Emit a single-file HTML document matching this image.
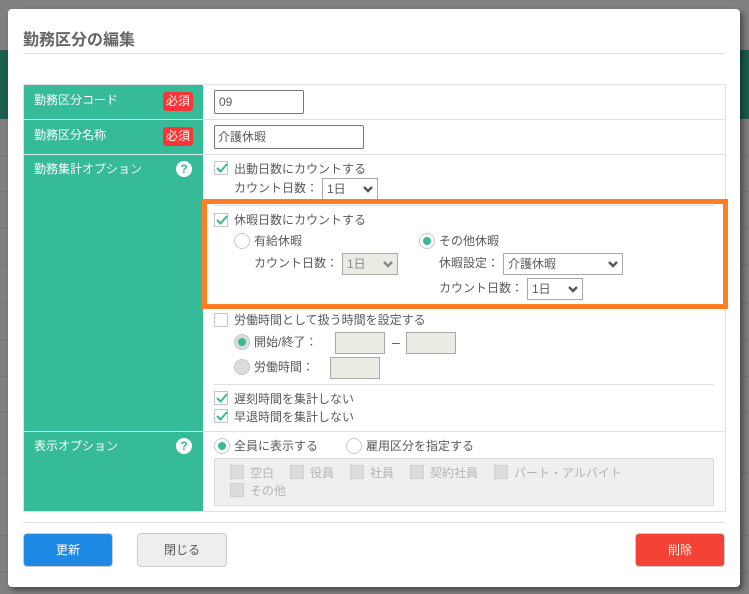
<!DOCTYPE html>
<html lang="ja"><head><meta charset="utf-8"><title>勤務区分の編集</title>
<style>
*{box-sizing:border-box}
html,body{margin:0;padding:0}
body{width:749px;height:594px;overflow:hidden;position:relative;background:#808080;font-family:"Liberation Sans","Noto Sans CJK JP",sans-serif;font-size:12px;color:#555}
div,span.a{position:absolute}
.t{position:absolute;white-space:nowrap;line-height:16px;font-size:12px;color:#5a5a5a}
.w{color:#fff}
.g{color:#b4b4b4}
.cb{position:absolute;width:14px;height:14px;border:1px solid #c4c4c4;background:#fff}
.cb svg{position:absolute;left:0;top:-1px}
.cbd{background:#dcdcdc;border-color:#cfcfcf}
.r{position:absolute;width:16px;height:16px;border-radius:50%;border:1px solid #c8c8c8;background:#fff}
.r i{position:absolute;left:3px;top:3px;width:8px;height:8px;border-radius:50%;background:#36bb99}
.rd{background:#dcdcdc}
.inp{position:absolute;border:1px solid #767676;border-radius:2px;background:#fff;font-size:12px;color:#5a5a5a;line-height:23px;padding-left:3px}
.sel{position:absolute;border:1px solid #a9a9a9;background:#fff;height:22px;font-size:12px;line-height:21px;padding-left:4px;color:#5a5a5a}
.sel svg{position:absolute;right:4px;top:7px}
.dis{background:#ebebe4;border-color:#a9a9a9}
.req{position:absolute;left:163px;width:30px;height:19px;background:#f93535;border-radius:3px;color:#fff;font-size:12px;line-height:19px;text-align:center}
.q{position:absolute;left:176px;width:16px;height:16px;border-radius:50%;background:#fff;color:#36bb99;font-weight:bold;font-size:12px;line-height:16px;text-align:center}
.hl{position:absolute;height:1px;background:#e0e0e0}
.bl{position:absolute;height:1px;background:#757575}
.btn{position:absolute;top:533px;height:34px;border-radius:4px;text-align:center;line-height:32px;font-size:12px;border:1px solid #ccc}
</style></head><body>
<div style="left:0;top:50px;width:749px;height:69px;background:#1b5e4e"></div>
<div class="bl" style="left:0;top:156px;width:749px"></div>
<div class="bl" style="left:0;top:191px;width:749px"></div>
<div class="bl" style="left:0;top:228px;width:749px"></div>
<div class="bl" style="left:0;top:265px;width:749px"></div>
<div class="bl" style="left:0;top:302px;width:749px"></div>
<div class="bl" style="left:0;top:339px;width:749px"></div>
<div class="bl" style="left:0;top:376px;width:749px"></div>
<div class="bl" style="left:0;top:411px;width:749px"></div>
<div class="bl" style="left:0;top:473px;width:749px"></div>
<div class="bl" style="left:0;top:535px;width:749px"></div>
<div class="bl" style="left:0;top:572px;width:749px"></div>

<div style="left:8px;top:9px;width:732px;height:578px;background:#fff;border-radius:4px;box-shadow:3px 3px 6px rgba(0,0,0,.45)"></div>

<span class="t" style="left:23px;top:32px;font-size:16px;line-height:18px;font-weight:bold;color:#666">勤務区分の編集</span>
<div class="hl" style="left:23px;top:53px;width:702px;background:#e2e2e2"></div>

<!-- table -->
<div style="left:23px;top:84px;width:703px;height:428px;border:1px solid #e0e0e0"></div>
<div style="left:24px;top:85px;width:179px;height:426px;background:#36bb99"></div>
<div class="hl" style="left:24px;top:119px;width:179px;background:#d5efe8"></div>
<div class="hl" style="left:24px;top:154px;width:179px;background:#d5efe8"></div>
<div class="hl" style="left:24px;top:431px;width:179px;background:#d5efe8"></div>
<div class="hl" style="left:203px;top:119px;width:522px"></div>
<div class="hl" style="left:203px;top:154px;width:522px"></div>
<div class="hl" style="left:203px;top:431px;width:522px"></div>

<span class="t w" style="left:34px;top:92px">勤務区分コード</span>
<div class="req" style="top:92px">必須</div>
<span class="t w" style="left:34px;top:127px">勤務区分名称</span>
<div class="req" style="top:127px">必須</div>
<span class="t w" style="left:34px;top:161px">勤務集計オプション</span>
<div class="q" style="top:161px">?</div>
<span class="t w" style="left:34px;top:438px">表示オプション</span>
<div class="q" style="top:438px">?</div>

<div class="inp" style="left:214px;top:90px;width:90px;height:24px;padding-left:4px">09</div>
<div class="inp" style="left:214px;top:125px;width:150px;height:24px">介護休暇</div>

<div class="cb" style="left:214px;top:161px"><svg width="14" height="14" viewBox="0 0 14 14"><path d="M2 7l3.5 3.5L12 3" fill="none" stroke="#36bb99" stroke-width="2"/></svg></div>
<span class="t" style="left:234px;top:161px">出動日数にカウントする</span>
<span class="t" style="left:234px;top:180px">カウント日数：</span>
<div class="sel" style="left:322px;top:178px;width:56px">1日<svg width="10" height="7" viewBox="0 0 10 7"><path d="M1 1l4 4 4-4" fill="none" stroke="#555" stroke-width="2.4"/></svg></div>

<!-- highlight box -->
<div class="hl" style="left:214px;top:205px;width:500px"></div>
<div style="left:202px;top:199px;width:526px;height:110px;border:5px solid #fd7e24"></div>

<div class="cb" style="left:214px;top:213px"><svg width="14" height="14" viewBox="0 0 14 14"><path d="M2 7l3.5 3.5L12 3" fill="none" stroke="#36bb99" stroke-width="2"/></svg></div>
<span class="t" style="left:234px;top:212px">休暇日数にカウントする</span>
<div class="r" style="left:234px;top:233px"></div>
<span class="t" style="left:254px;top:233px">有給休暇</span>
<span class="t" style="left:254px;top:255px">カウント日数：</span>
<div class="sel dis" style="left:342px;top:253px;width:56px;color:#8a8a8a;background:#ebebe4">1日<svg width="10" height="7" viewBox="0 0 10 7"><path d="M1 1l4 4 4-4" fill="none" stroke="#888" stroke-width="2.4"/></svg></div>

<div class="r" style="left:419px;top:233px"><i></i></div>
<span class="t" style="left:439px;top:233px">その他休暇</span>
<span class="t" style="left:439px;top:255px">休暇設定：</span>
<div class="sel" style="left:503px;top:253px;width:120px">介護休暇<svg width="10" height="7" viewBox="0 0 10 7"><path d="M1 1l4 4 4-4" fill="none" stroke="#555" stroke-width="2.4"/></svg></div>
<span class="t" style="left:439px;top:280px">カウント日数：</span>
<div class="sel" style="left:527px;top:278px;width:56px">1日<svg width="10" height="7" viewBox="0 0 10 7"><path d="M1 1l4 4 4-4" fill="none" stroke="#555" stroke-width="2.4"/></svg></div>

<div class="cb" style="left:214px;top:313px"></div>
<span class="t" style="left:234px;top:312px">労働時間として扱う時間を設定する</span>
<div class="r rd" style="left:234px;top:334px"><i></i></div>
<span class="t" style="left:254px;top:334px">開始/終了：</span>
<div class="sel dis" style="left:335px;top:332px;width:50px"></div>
<span class="t" style="left:392px;top:334px;font-size:14px">–</span>
<div class="sel dis" style="left:406px;top:332px;width:50px"></div>
<div class="r rd" style="left:234px;top:359px"></div>
<span class="t" style="left:254px;top:359px">労働時間：</span>
<div class="sel dis" style="left:330px;top:357px;width:50px"></div>

<div class="hl" style="left:214px;top:384px;width:500px"></div>
<div class="cb" style="left:214px;top:391px"><svg width="14" height="14" viewBox="0 0 14 14"><path d="M2 7l3.5 3.5L12 3" fill="none" stroke="#36bb99" stroke-width="2"/></svg></div>
<span class="t" style="left:234px;top:391px">遅刻時間を集計しない</span>
<div class="cb" style="left:214px;top:409px"><svg width="14" height="14" viewBox="0 0 14 14"><path d="M2 7l3.5 3.5L12 3" fill="none" stroke="#36bb99" stroke-width="2"/></svg></div>
<span class="t" style="left:234px;top:409px">早退時間を集計しない</span>

<div class="r" style="left:214px;top:438px"><i></i></div>
<span class="t" style="left:234px;top:438px">全員に表示する</span>
<div class="r" style="left:346px;top:438px"></div>
<span class="t" style="left:366px;top:438px">雇用区分を指定する</span>

<div style="left:214px;top:458px;width:500px;height:48px;background:#efefef;border:1px solid #dcdcdc"></div>
<div class="cb cbd" style="left:230px;top:465px"></div><span class="t g" style="left:250px;top:465px">空白</span>
<div class="cb cbd" style="left:290px;top:465px"></div><span class="t g" style="left:310px;top:465px">役員</span>
<div class="cb cbd" style="left:350px;top:465px"></div><span class="t g" style="left:370px;top:465px">社員</span>
<div class="cb cbd" style="left:410px;top:465px"></div><span class="t g" style="left:430px;top:465px">契約社員</span>
<div class="cb cbd" style="left:494px;top:465px"></div><span class="t g" style="left:514px;top:465px">パート・アルバイト</span>
<div class="cb cbd" style="left:230px;top:483px"></div><span class="t g" style="left:250px;top:483px">その他</span>

<div class="hl" style="left:23px;top:522px;width:702px"></div>
<div class="btn" style="left:23px;width:90px;background:#1e88e5;color:#fff">更新</div>
<div class="btn" style="left:137px;width:90px;background:#eee;color:#555">閉じる</div>
<div class="btn" style="left:635px;width:90px;background:#f44336;color:#fff">削除</div>
</body></html>
